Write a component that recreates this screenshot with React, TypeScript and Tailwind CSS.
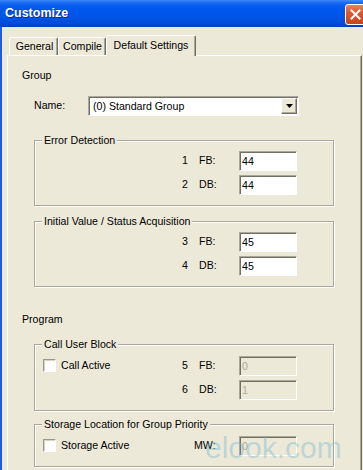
import React from "react";

const FONT = "font-['Liberation_Sans',Arial,sans-serif]";

function Field({ value, disabled }: { value: string; disabled?: boolean }) {
  return (
    <div
      className={`w-[58px] h-5 flex items-center pl-[2px] border border-t-[#ACA899] border-l-[#ACA899] border-r-white border-b-white shadow-[inset_1px_1px_0_#716F64] text-[10.6px] leading-none ${
        disabled ? "bg-[#ECE9D8] text-[#ACA899]" : "bg-white text-black"
      }`}
    >
      {value}
    </div>
  );
}

function Check() {
  return (
    <div className="w-[13px] h-[13px] bg-white border border-t-[#9D9A8C] border-l-[#9D9A8C] border-r-white border-b-white shadow-[inset_1px_1px_0_#D6D3C6]" />
  );
}

function Row({
  num,
  label,
  value,
  disabled,
  check,
  leftW = "w-[139px]",
  labelW = "w-[40px]",
}: {
  num?: string;
  label: string;
  value: string;
  disabled?: boolean;
  check?: string;
  leftW?: string;
  labelW?: string;
}) {
  return (
    <div className="flex items-center h-5">
      <div className={`${leftW} flex items-center gap-[5px]`}>
        {check && (
          <>
            <Check />
            <span>{check}</span>
          </>
        )}
      </div>
      {num !== undefined && <span className="w-[17px]">{num}</span>}
      <span className={labelW}>{label}</span>
      <Field value={value} disabled={disabled} />
    </div>
  );
}

function GroupBox({
  title,
  mt,
  firstMt,
  children,
}: {
  title: string;
  mt: string;
  firstMt: string;
  children: React.ReactNode;
}) {
  return (
    <div
      className={`${mt} ml-[12px] w-[300px] flex flex-col border border-[#ACA899] shadow-[1px_1px_0_#fff,inset_1px_1px_0_#fff] pl-[8px] pb-[10px]`}
    >
      <div className="-mt-[8px] -ml-[1px] w-fit bg-[#ECE9D8] px-[2px] leading-[14px]">{title}</div>
      <div className={`${firstMt} flex flex-col gap-[4px]`}>{children}</div>
    </div>
  );
}

export default function App() {
  return (
    <div className={`relative w-[363px] h-[470px] overflow-hidden bg-[#ECE9D8] flex flex-col text-[10.6px] text-black ${FONT}`}>
      {/* Title bar */}
      <div className="h-[27px] flex items-start overflow-hidden pl-[5px] bg-[linear-gradient(to_bottom,#3D8DF7_0px,#1A68F0_3px,#0058EE_8px,#0055E8_60%,#004AD8_90%,#003CC0_100%)]">
        <span className="mt-[6px] text-[12.5px] leading-[15px] font-bold text-white [text-shadow:1px_1px_0_#0A2A8A]">
          Customize
        </span>
        <div className="ml-auto mr-[-3px] mt-[4px] w-[21px] h-[21px] rounded-[3px] border border-white bg-[linear-gradient(to_bottom,#E9805E,#DB5A34_40%,#C8441C)] flex items-center justify-center">
          <svg width="11" height="11" viewBox="0 0 11 11">
            <path d="M1.5 1.5 L9.5 9.5 M9.5 1.5 L1.5 9.5" stroke="#fff" strokeWidth="2" strokeLinecap="square" />
          </svg>
        </div>
      </div>

      {/* Body */}
      <div className="flex-1 flex flex-col border-l-2 border-l-[#1D5CE6] pl-[5px]">
        {/* Tabs */}
        <div className="mt-[8px] pl-[2px] flex items-end h-[20px]">
          <div className="w-[49px] h-[18px] flex items-center justify-center pl-[2px] border-t border-l border-white border-r border-r-[#716F64] shadow-[inset_-1px_0_0_#ACA899] rounded-t-[2px]">
            General
          </div>
          <div className="w-[48px] h-[18px] flex items-center justify-center pl-[1px] border-t border-l border-white border-r border-r-[#716F64] shadow-[inset_-1px_0_0_#ACA899] rounded-t-[2px]">
            Compile
          </div>
          <div className="relative z-10 -mb-px w-[90px] h-[21px] flex items-center justify-center bg-[#ECE9D8] border-t border-l border-white border-r border-r-[#716F64] shadow-[inset_-1px_0_0_#ACA899] rounded-t-[2px] pb-[1px]">
            Default Settings
          </div>
        </div>

        {/* Panel */}
        <div className="w-[355px] flex-1 flex flex-col border-t border-l border-white border-r border-r-[#716F64] shadow-[inset_-1px_0_0_#ACA899] pl-[14px] pt-[12px]">
          <div className="leading-[14px]">Group</div>

          <div className="mt-[14px] ml-[12px] flex items-center h-5">
            <span className="w-[54px]">Name:</span>
            <div className="w-[211px] h-5 flex items-center p-[1px] bg-white border border-t-[#ACA899] border-l-[#ACA899] border-r-white border-b-white shadow-[inset_1px_1px_0_#716F64]">
              <span className="flex-1 pl-[3px] pt-[1px]">(0) Standard Group</span>
              <div className="w-4 h-4 flex items-center justify-center bg-[#ECE9D8] border border-t-white border-l-white border-r-[#716F64] border-b-[#716F64] shadow-[inset_-1px_-1px_0_#ACA899]">
                <svg width="7" height="4" viewBox="0 0 7 4">
                  <path d="M0 0 H7 L3.5 4 Z" fill="#000" />
                </svg>
              </div>
            </div>
          </div>

          <GroupBox title="Error Detection" mt="mt-[24px]" firstMt="mt-[4px]">
            <Row num="1" label="FB:" value="44" />
            <Row num="2" label="DB:" value="44" />
          </GroupBox>

          <GroupBox title="Initial Value / Status Acquisition" mt="mt-[15px]" firstMt="mt-[4px]">
            <Row num="3" label="FB:" value="45" />
            <Row num="4" label="DB:" value="45" />
          </GroupBox>

          <div className="mt-[25px] leading-[14px]">Program</div>

          <GroupBox title="Call User Block" mt="mt-[18px]" firstMt="mt-[5px]">
            <Row check="Call Active" num="5" label="FB:" value="0" disabled />
            <Row num="6" label="DB:" value="1" disabled />
          </GroupBox>

          <GroupBox title="Storage Location for Group Priority" mt="mt-[13px]" firstMt="mt-[5px]">
            <Row check="Storage Active" label="MW:" value="0" disabled leftW="w-[151px]" labelW="w-[45px]" />
          </GroupBox>
        </div>
      </div>

      {/* Watermark */}
      <div className="absolute left-[205px] top-[433px] text-[30px] leading-[30px] text-[rgba(110,180,205,0.38)] font-['Liberation_Sans',Arial,sans-serif] pointer-events-none">
        elook.com
      </div>
    </div>
  );
}
